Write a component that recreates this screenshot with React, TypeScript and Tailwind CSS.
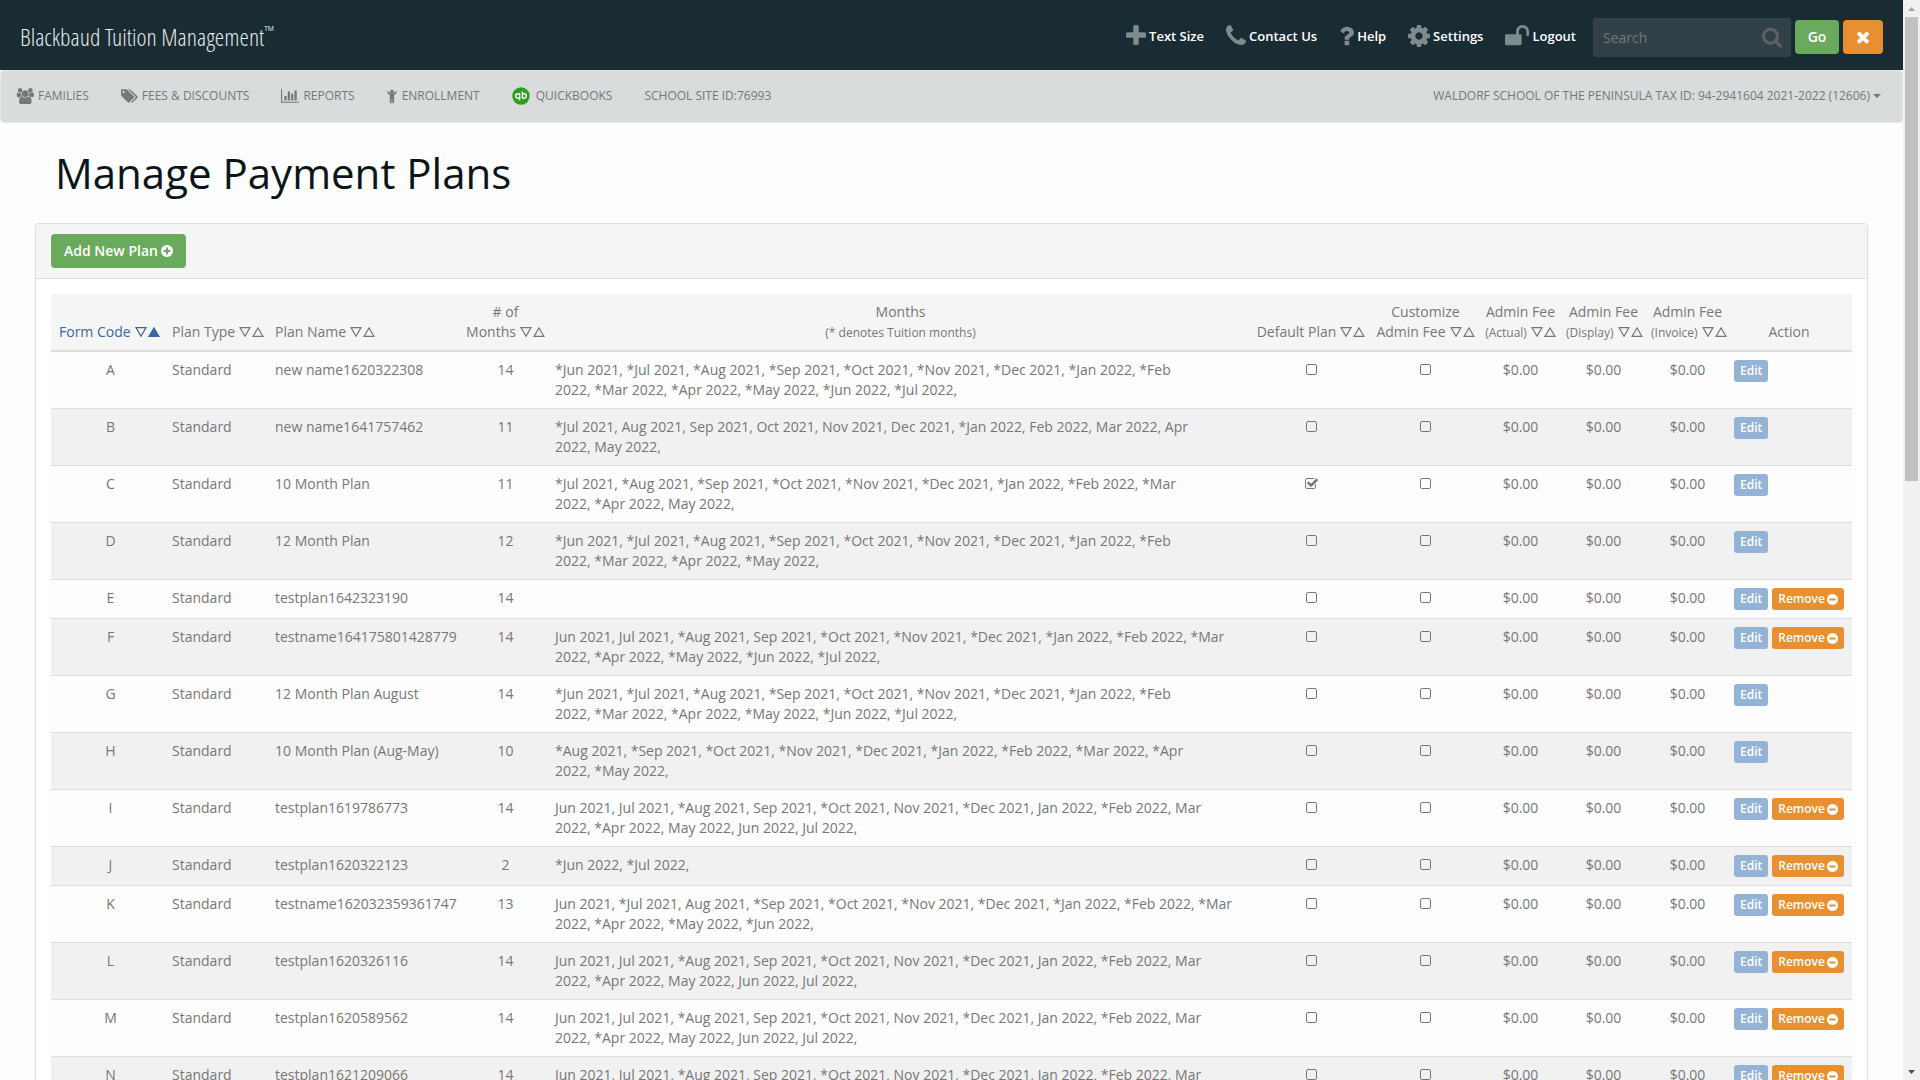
import { useState } from "react";

type Glyph = { x: number; w: number; d: string };

const CIRCLE =
  "m320-64q0 209-103 385.5t-279.5 279.5-385.5 103-385.5-103-279.5-279.5-103-385.5 103-385.5 279.5-279.5 385.5-103 385.5 103 279.5 279.5 103 385.5z";

const glyphs = {
  plus: { x: 192, w: 1408, d: "M1600 736v192q0 40-28 68t-68 28h-416v416q0 40-28 68t-68 28h-192q-40 0-68-28t-28-68v-416h-416q-40 0-68-28t-28-68v-192q0-40 28-68t68-28h416v-416q0-40 28-68t68-28h192q40 0 68 28t28 68v416h416q40 0 68 28t28 68z" },
  times: { x: 302, w: 1188, d: "M1490 1322q0 40-28 68l-136 136q-28 28-68 28t-68-28l-294-294-294 294q-28 28-68 28t-68-28l-136-136q-28-28-28-68t28-68l294-294-294-294q-28-28-28-68t28-68l136-136q28-28 68-28t68 28l294 294 294-294q28-28 68-28t68 28l136 136q28 28 28 68t-28 68l-294 294 294 294q28 28 28 68z" },
  plusCircle: { x: 128, w: 1536, d: "M1344 960v-128q0-26-19-45t-45-19h-256v-256q0-26-19-45t-45-19h-128q-26 0-45 19t-19 45v256h-256q-26 0-45 19t-19 45v128q0 26 19 45t45 19h256v256q0 26 19 45t45 19h128q26 0 45-19t19-45v-256h256q26 0 45-19t19-45z" + CIRCLE },
  minusCircle: { x: 128, w: 1536, d: "M1344 960v-128q0-26-19-45t-45-19h-768q-26 0-45 19t-19 45v128q0 26 19 45t45 19h768q26 0 45-19t19-45z" + CIRCLE },
  search: { x: 64, w: 1664, d: "M1216 832q0-185-131.5-316.5t-316.5-131.5-316.5 131.5-131.5 316.5 131.5 316.5 316.5 131.5 316.5-131.5 131.5-316.5zm512 832q0 52-38 90t-90 38q-54 0-90-38l-343-342q-179 124-399 124-143 0-273.5-55.5t-225-150-150-225-55.5-273.5 55.5-273.5 150-225 225-150 273.5-55.5 273.5 55.5 225 150 150 225 55.5 273.5q0 220-124 399l343 343q37 37 37 90z" },
  phone: { x: 192, w: 1408, d: "M1600 1240q0 27-10 70.5t-21 68.5q-21 50-122 106-94 51-186 51-27 0-52.5-3.5t-57.5-12.5-47.5-14.5-55.5-20.5-49-18q-98-35-175-83-128-79-264.5-215.5t-215.5-264.5q-48-77-83-175-3-9-18-49t-20.5-55.5-14.5-47.5-12.5-57.5-3.5-52.5q0-92 51-186 56-101 106-122 25-11 68.5-21t70.5-10q14 0 21 3 18 6 53 76 11 19 30 54t35 63.5 31 53.5q3 4 17.5 25t21.5 35.5 7 28.5q0 20-28.5 50t-62 55-62 53-28.5 46q0 9 5 22.5t8.5 20.5 14 24 11.5 19q76 137 174 235t235 174q2 1 19 11.5t24 14 20.5 8.5 22.5 5q18 0 46-28.5t53-62 55-62 50-28.5q14 0 28.5 7t35.5 21.5 25 17.5q25 15 53.5 31t63.5 35 54 30q70 35 76 53 3 7 3 21z" },
  question: { x: 384, w: 1024, d: "M1088 1256v240q0 16-12 28t-28 12h-240q-16 0-28-12t-12-28v-240q0-16 12-28t28-12h240q16 0 28 12t12 28zm316-600q0 54-15.5 101t-35 76.5-55 59.5-57.5 43.5-61 35.5q-41 23-68.5 65t-27.5 67q0 17-12 32.5t-28 15.5h-240q-15 0-25.5-18.5t-10.5-37.5v-45q0-83 65-156.5t143-108.5q59-27 84-56t25-76q0-42-46.5-74t-107.5-32q-65 0-108 29-35 25-107 115-13 16-31 16-12 0-25-8l-164-125q-13-10-15.5-25t5.5-28q160-266 464-266 80 0 161 31t146 83 106 127.5 41 158.5z" },
  cog: { x: 128, w: 1536, d: "M1152 896q0-106-75-181t-181-75-181 75-75 181 75 181 181 75 181-75 75-181zm512-109v222q0 12-8 23t-20 13l-185 28q-19 54-39 91 35 50 107 138 10 12 10 25t-9 23q-27 37-99 108t-94 71q-12 0-26-9l-138-108q-44 23-91 38-16 136-29 186-7 28-36 28h-222q-14 0-24.5-8.5t-11.5-21.5l-28-184q-49-16-90-37l-141 107q-10 9-25 9-14 0-25-11-126-114-165-168-7-10-7-23 0-12 8-23 15-21 51-66.5t54-70.5q-27-50-41-99l-183-27q-13-2-21-12.5t-8-23.5v-222q0-12 8-23t19-13l186-28q14-46 39-92-40-57-107-138-10-12-10-24 0-10 9-23 26-36 98.5-107.5t94.5-71.5q13 0 26 10l138 107q44-23 91-38 16-136 29-186 7-28 36-28h222q14 0 24.5 8.5t11.5 21.5l28 184q49 16 90 37l142-107q9-9 24-9 13 0 25 10 129 119 165 170 7 8 7 22 0 12-8 23-15 21-51 66.5t-54 70.5q26 50 41 98l183 28q13 2 21 12.5t8 23.5z" },
  unlock: { x: 64, w: 1664, d: "M1728 576v256q0 26-19 45t-45 19h-64q-26 0-45-19t-19-45v-256q0-106-75-181t-181-75-181 75-75 181v192h96q40 0 68 28t28 68v576q0 40-28 68t-68 28h-960q-40 0-68-28t-28-68v-576q0-40 28-68t68-28h672v-192q0-185 131.5-316.5t316.5-131.5 316.5 131.5 131.5 316.5z" },
  users: { x: 0, w: 1984, d: "M657 896q-162 5-265 128h-134q-82 0-138-40.5t-56-118.5q0-353 124-353 6 0 43.5 21t97.5 42.5 119 21.5q67 0 133-23-5 37-5 66 0 159 90 294zm1071 637q0 120-73 189.5t-194 69.5h-874q-121 0-194-69.5t-73-189.5q0-53 3.5-103.5t14-109 26.5-108.5 43-97.5 62-81 85.5-53.5 111.5-20q10 0 43 21.5t73 48 107 48 135 21.5 135-21.5 107-48 73-48 43-21.5q61 0 111.5 20t85.5 53.5 62 81 43 97.5 26.5 108.5 14 109 3.5 103.5zm-1024-1277q0 106-75 181t-181 75-181-75-75-181 75-181 181-75 181 75 75 181zm704 384q0 159-112.5 271.5t-271.5 112.5-271.5-112.5-112.5-271.5 112.5-271.5 271.5-112.5 271.5 112.5 112.5 271.5zm576 225q0 78-56 118.5t-138 40.5h-134q-103-123-265-128 90-135 90-294 0-29-5-66 66 23 133 23 59 0 119-21.5t97.5-42.5 43.5-21q124 0 124 353zm-128-609q0 106-75 181t-181 75-181-75-75-181 75-181 181-75 181 75 75 181z" },
  tags: { x: 0, w: 1856, d: "M384 448q0-53-37.5-90.5t-90.5-37.5-90.5 37.5-37.5 90.5 37.5 90.5 90.5 37.5 90.5-37.5 37.5-90.5zm1067 576q0 53-37 90l-491 492q-39 37-91 37-53 0-90-37l-715-716q-38-37-64.5-101t-26.5-117v-416q0-52 38-90t90-38h416q53 0 117 26.5t102 64.5l715 714q37 39 37 91zm384 0q0 53-37 90l-491 492q-39 37-91 37-36 0-59-14t-53-45l470-470q37-37 37-90 0-52-37-91l-715-714q-38-38-102-64.5t-117-26.5h224q53 0 117 26.5t102 64.5l715 714q37 39 37 91z" },
  chart: { x: 0, w: 2048, d: "M640 896v512h-256v-512h256zm384-512v1024h-256v-1024h256zm1024 1152v128h-2048v-1536h128v1408h1920zm-640-896v768h-256v-768h256zm384-384v1152h-256v-1152h256z" },
  child: { x: 256, w: 1280, d: "M1380 516l-292 292v824q0 46-33 79t-79 33-79-33-33-79v-384h-64v384q0 46-33 79t-79 33-79-33-33-79v-824l-292-292q-28-28-28-68t28-68 68-28 68 28l228 228h368l228-228q28-28 68-28t68 28 28 68-28 68zM1056 384q0 93-65.500 158.500t-158.500 65.500-158.500-65.500-65.500-158.500 65.500-158.500 158.500-65.500 158.500 65.500 65.500 158.500z" },
  square: { x: 192, w: 1408, d: "M1312 256h-832q-66 0-113 47t-47 113v832q0 66 47 113t113 47h832q66 0 113-47t47-113v-832q0-66-47-113t-113-47zm288 160v832q0 119-84.500 203.500t-203.500 84.500h-832q-119 0-203.500-84.500t-84.500-203.500v-832q0-119 84.500-203.500t203.500-84.500h832q119 0 203.500 84.500t84.500 203.500z" },
  checkSquare: { x: 64, w: 1664, d: "M1472 930v318q0 119-84.500 203.500t-203.500 84.500h-832q-119 0-203.500-84.500t-84.500-203.500v-832q0-119 84.500-203.500t203.500-84.500h832q63 0 117 25 15 7 18 23 3 17-9 29l-49 49q-10 10-23 10-3 0-9-2-23-6-45-6h-832q-66 0-113 47t-47 113v832q0 66 47 113t113 47h832q66 0 113-47t47-113v-254q0-13 9-22l64-64q10-10 23-10 6 0 12 3 20 8 20 29zm231-489l-814 814q-24 24-57 24t-57-24l-430-430q-24-24-24-57t24-57l110-110q24-24 57-24t57 24l263 263 647-647q24-24 57-24t57 24l110 110q24 24 24 57t-24 57z" },
} satisfies Record<string, Glyph>;

function Icon({ name, size, className }: { name: keyof typeof glyphs; size: number; className?: string }) {
  const g = glyphs[name];
  return (
    <svg aria-hidden="true" height={size} width={Math.round((g.w / 1792) * size)} viewBox={`${g.x} 0 ${g.w} 1792`} fill="currentColor" className={className}>
      <path d={g.d} />
    </svg>
  );
}

function QuickBooksLogo() {
  return (
    <svg aria-hidden="true" width="18" height="18" viewBox="0 0 18 18" fill="none">
      <circle cx="9" cy="9" r="8.700" fill="#2ca01c" />
      <g stroke="#fff" strokeWidth="1.400">
        <path d="M7.600 11.300H6a2.300 2.300 0 0 1 0-4.600h1.600v6.900" />
        <path d="M10.400 6.700H12a2.300 2.300 0 0 1 0 4.600h-1.600V4.400" />
      </g>
    </svg>
  );
}

const topLinks: { icon: keyof typeof glyphs; label: string }[] = [
  { icon: "plus", label: "Text Size" },
  { icon: "phone", label: "Contact Us" },
  { icon: "question", label: "Help" },
  { icon: "cog", label: "Settings" },
  { icon: "unlock", label: "Logout" },
];

const navLinks: { icon: keyof typeof glyphs; label: string }[] = [
  { icon: "users", label: "Families" },
  { icon: "tags", label: "Fees & Discounts" },
  { icon: "chart", label: "Reports" },
  { icon: "child", label: "Enrollment" },
];

type Plan = { code: string; name: string; count: number; months: string; isDefault?: boolean; removable?: boolean };

const MIXED = "Jun 2021, Jul 2021, *Aug 2021, Sep 2021, *Oct 2021, Nov 2021, *Dec 2021, Jan 2022, *Feb 2022, Mar 2022, *Apr 2022, May 2022, Jun 2022, Jul 2022,";
const ALL = "*Jun 2021, *Jul 2021, *Aug 2021, *Sep 2021, *Oct 2021, *Nov 2021, *Dec 2021, *Jan 2022, *Feb 2022, *Mar 2022, *Apr 2022, *May 2022, *Jun 2022, *Jul 2022,";

const plans: Plan[] = [
  { code: "A", name: "new name1620322308", count: 14, months: ALL },
  { code: "B", name: "new name1641757462", count: 11, months: "*Jul 2021, Aug 2021, Sep 2021, Oct 2021, Nov 2021, Dec 2021, *Jan 2022, Feb 2022, Mar 2022, Apr 2022, May 2022," },
  { code: "C", name: "10 Month Plan", count: 11, isDefault: true, months: "*Jul 2021, *Aug 2021, *Sep 2021, *Oct 2021, *Nov 2021, *Dec 2021, *Jan 2022, *Feb 2022, *Mar 2022, *Apr 2022, May 2022," },
  { code: "D", name: "12 Month Plan", count: 12, months: "*Jun 2021, *Jul 2021, *Aug 2021, *Sep 2021, *Oct 2021, *Nov 2021, *Dec 2021, *Jan 2022, *Feb 2022, *Mar 2022, *Apr 2022, *May 2022," },
  { code: "E", name: "testplan1642323190", count: 14, months: "", removable: true },
  { code: "F", name: "testname164175801428779", count: 14, removable: true, months: "Jun 2021, Jul 2021, *Aug 2021, Sep 2021, *Oct 2021, *Nov 2021, *Dec 2021, *Jan 2022, *Feb 2022, *Mar 2022, *Apr 2022, *May 2022, *Jun 2022, *Jul 2022," },
  { code: "G", name: "12 Month Plan August", count: 14, months: ALL },
  { code: "H", name: "10 Month Plan (Aug-May)", count: 10, months: "*Aug 2021, *Sep 2021, *Oct 2021, *Nov 2021, *Dec 2021, *Jan 2022, *Feb 2022, *Mar 2022, *Apr 2022, *May 2022," },
  { code: "I", name: "testplan1619786773", count: 14, months: MIXED, removable: true },
  { code: "J", name: "testplan1620322123", count: 2, months: "*Jun 2022, *Jul 2022,", removable: true },
  { code: "K", name: "testname162032359361747", count: 13, removable: true, months: "Jun 2021, *Jul 2021, Aug 2021, *Sep 2021, *Oct 2021, *Nov 2021, *Dec 2021, *Jan 2022, *Feb 2022, *Mar 2022, *Apr 2022, *May 2022, *Jun 2022," },
  { code: "L", name: "testplan1620326116", count: 14, months: MIXED, removable: true },
  { code: "M", name: "testplan1620589562", count: 14, months: MIXED, removable: true },
  { code: "N", name: "testplan1621209066", count: 14, months: MIXED, removable: true },
];

function Sort({ active }: { active?: boolean }) {
  return (
    <button type="button" aria-label="Sort" className="ml-1 inline-block align-baseline leading-none">
      <svg aria-hidden="true" width="25" height="10" viewBox="0 0 25 10" fill="none" stroke="currentColor" strokeWidth="1.200" className="block">
        <path d="M1 .6h10L6 9.300z" />
        <path d="M14 9.400h10L19 .9z" fill={active ? "currentColor" : "none"} />
      </svg>
    </button>
  );
}

function Tick({ label, initial }: { label: string; initial?: boolean }) {
  const [on, setOn] = useState(!!initial);
  return (
    <span className="relative inline-flex h-5 w-4 items-center justify-center align-top">
      <input type="checkbox" aria-label={label} checked={on} onChange={() => setOn(!on)} className="absolute inset-0 cursor-pointer appearance-none" />
      <Icon name={on ? "checkSquare" : "square"} size={14} className="pointer-events-none" />
    </span>
  );
}

function PlanRow({ plan }: { plan: Plan }) {
  const cell = "px-[5px] py-2";
  return (
    <tr className="border-t border-[#ddd] align-top first:border-t-0 odd:bg-[#fdfdfd] even:bg-[#f1f1f1]">
      <td className="py-2 pr-[5px] pl-2 text-center">{plan.code}</td>
      <td className={cell}>Standard</td>
      <td className={cell}>{plan.name}</td>
      <td className="px-[5px] py-2 text-center">{plan.count}</td>
      <td className={cell}>{plan.months.replaceAll(", ", ",\u00a0")}</td>
      <td className="px-[5px] py-2 text-center"><Tick label={`Default plan ${plan.code}`} initial={plan.isDefault} /></td>
      <td className="px-[5px] py-2 text-center"><Tick label={`Customize admin fee ${plan.code}`} /></td>
      <td className="px-[5px] py-2 text-center">$0.00</td>
      <td className="px-[5px] py-2 text-center">$0.00</td>
      <td className="px-[5px] py-2 text-center">$0.00</td>
      <td className="py-2 pr-2 pl-[5px]">
        <div className="flex gap-1 text-xs font-semibold text-white">
          <button type="button" className="h-[22px] rounded-[3px] bg-[#95b3d7] px-1.5">Edit</button>
          {plan.removable && (
            <button type="button" className="flex h-[22px] items-center gap-0.5 rounded-[3px] bg-[#e88f30] px-1.5">
              Remove <Icon name="minusCircle" size={13} />
            </button>
          )}
        </div>
      </td>
    </tr>
  );
}

function PlansTable() {
  const th = "px-[5px] py-2 font-medium";
  return (
    <table className="w-full table-fixed border-collapse text-sm leading-5">
      <colgroup>
        <col className="w-[116px]" />
        <col className="w-[103px]" />
        <col className="w-[191px]" />
        <col className="w-[89px]" />
        <col />
        <col className="w-[120px]" />
        <col className="w-[109px]" />
        <col className="w-[81px]" />
        <col className="w-[85px]" />
        <col className="w-[83px]" />
        <col className="w-[123px]" />
      </colgroup>
      <thead className="border-b-2 border-[#ddd] bg-[#f5f5f5] align-bottom font-['Open_Sans_Medium','Open_Sans',sans-serif] whitespace-nowrap">
        <tr>
          <th scope="col" className="py-2 pl-2 text-left font-medium text-[#36699f]">Form Code<Sort active /></th>
          <th scope="col" className="py-2 pl-[5px] text-left font-medium">Plan Type<Sort /></th>
          <th scope="col" className="px-[5px] py-2 text-left font-medium">Plan Name<Sort /></th>
          <th scope="col" className={th}># of<br />Months<Sort /></th>
          <th scope="col" className={th}>Months<br /><small className="text-xs leading-none">(* denotes Tuition months)</small></th>
          <th scope="col" className={th}>Default Plan<Sort /></th>
          <th scope="col" className={th}>Customize<br />Admin Fee<Sort /></th>
          <th scope="col" className={th}>Admin Fee<br /><small className="text-xs leading-none">(Actual)</small><Sort /></th>
          <th scope="col" className={th}>Admin Fee<br /><small className="text-xs leading-none">(Display)</small><Sort /></th>
          <th scope="col" className={th}>Admin Fee<br /><small className="text-xs leading-none">(Invoice)</small><Sort /></th>
          <th scope="col" className="py-2 pr-2 pl-[5px] font-medium">Action</th>
        </tr>
      </thead>
      <tbody>
        {plans.map((plan) => <PlanRow key={plan.code} plan={plan} />)}
      </tbody>
    </table>
  );
}

function TopBar() {
  return (
    <header className="flex h-[70px] items-center justify-between bg-[#192b33] px-5 pt-1">
      <a href="#" className="flex items-start font-['Open_Sans_Condensed_Light','Open_Sans_Light_Condensed','Roboto_Condensed','Liberation_Sans_Narrow','Open_Sans',sans-serif] text-2xl font-light text-[#e4e8e8]">
        Blackbaud Tuition Management<span className="text-sm leading-5">™</span>
      </a>
      <div className="flex items-center">
        <nav className="mr-[17px] flex gap-[22px] pb-0.5">
          {topLinks.map((l) => (
            <a key={l.label} href="#" className="flex items-center gap-[3px] text-[13px] font-semibold text-white">
              <Icon name={l.icon} size={26} className="text-[#7f8c8d]" />
              {l.label}
            </a>
          ))}
        </nav>
        <form className="flex items-center gap-1" onSubmit={(e) => e.preventDefault()}>
          <label className="relative block">
            <input type="search" placeholder="Search" aria-label="Search" className="h-[39px] w-[198px] rounded-[3px] bg-[#324147] px-2.5 text-sm text-white placeholder:text-[#777]" />
            <Icon name="search" size={22} className="absolute top-2 right-[9px] text-[#5c6163]" />
          </label>
          <button type="submit" className="h-[34px] w-11 rounded bg-[#6aaa5c] text-sm font-semibold text-white">Go</button>
          <button type="reset" aria-label="Clear" className="flex h-[34px] w-10 items-center justify-center rounded bg-[#e88f30] text-white"><Icon name="times" size={18} /></button>
        </form>
      </div>
    </header>
  );
}

function NavBar() {
  return (
    <nav className="flex h-[53px] items-center justify-between rounded border border-[#e7e7e7] bg-[#d8dcdc] px-[15px] pb-0.5 font-['Open_Sans_Medium','Open_Sans',sans-serif] text-xs font-medium text-[#777] uppercase">
      <div className="flex items-center gap-8">
        {navLinks.map((l) => (
          <a key={l.label} href="#" className="flex items-center gap-1"><Icon name={l.icon} size={16} />{l.label}</a>
        ))}
        <a href="#" className="flex items-center gap-1.5"><QuickBooksLogo />QuickBooks</a>
        <a href="#">School Site ID:76993</a>
      </div>
      <button type="button" className="mr-1.5 flex items-center gap-[3px] uppercase">
        Waldorf School of the Peninsula Tax ID: 94-2941604 2021-2022 (12606)
        <svg aria-hidden="true" width="8" height="4" viewBox="0 0 8 4" fill="currentColor"><path d="M0 0h8L4 4z" /></svg>
      </button>
    </nav>
  );
}

function ScrollTrack() {
  return (
    <div aria-hidden="true" className="flex w-[17px] shrink-0 flex-col items-center bg-[#f1f1f1]">
      <svg width="17" height="17" viewBox="0 0 17 17" fill="#a3a3a3"><path d="M5 11h7L8.500 7z" /></svg>
      <div className="h-[43vh] w-[13px] bg-[#c1c1c1]" />
      <svg width="17" height="17" viewBox="0 0 17 17" fill="#505050" className="mt-auto"><path d="M5 7h7l-3.500 4z" /></svg>
    </div>
  );
}

export default function App() {
  return (
    <div className="flex h-screen bg-[#fdfdfd] font-['Open_Sans',sans-serif] text-sm text-[#777]">
      <div className="min-w-0 flex-1 overflow-hidden">
        <TopBar />
        <NavBar />
        <main className="px-[35px]">
          <h1 className="px-5 pt-[21px] pb-[21px] text-[42px] leading-[58px] text-[#0b1519]">Manage Payment Plans</h1>
          <section className="rounded border border-[#ddd] bg-white shadow-xs">
            <div className="border-b border-[#ddd] bg-[#f5f5f5] px-[15px] py-2.5">
              <button type="button" className="flex h-[34px] items-center gap-[3px] rounded bg-[#6aaa5c] px-[13px] text-sm font-semibold text-white">
                Add New Plan <Icon name="plusCircle" size={14} />
              </button>
            </div>
            <div className="p-[15px]"><PlansTable /></div>
          </section>
        </main>
      </div>
      <ScrollTrack />
    </div>
  );
}
